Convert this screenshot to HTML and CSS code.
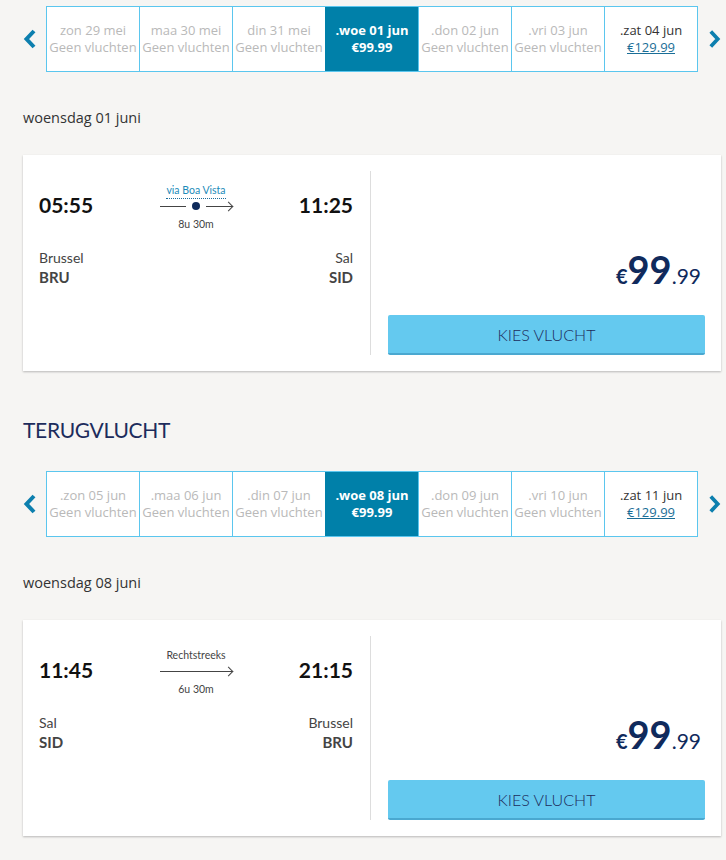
FILE: index.html
```html
<!DOCTYPE html>
<html lang="nl">
<head>
  <meta charset="UTF-8" />
  <meta name="viewport" content="width=device-width, initial-scale=1.0" />
  <title>Vluchten kiezen</title>
  <link rel="stylesheet" href="styles.css">
</head>
<body>
  <main class="page">
    <!-- Heenvlucht -->
    <div class="date-strip">
      <span class="nav-arrow">
        <svg width="14" height="22" viewBox="0 0 14 22"><path d="M11 3 L3.5 11 L11 19" fill="none" stroke="#0d7fae" stroke-width="4"/></svg>
      </span>
      <ul class="days">
        <li class="day empty"><span>zon 29 mei</span><span>Geen vluchten</span></li>
        <li class="day empty"><span>maa 30 mei</span><span>Geen vluchten</span></li>
        <li class="day empty"><span>din 31 mei</span><span>Geen vluchten</span></li>
        <li class="day active"><span>.woe 01 jun</span><span>€99.99</span></li>
        <li class="day empty"><span>.don 02 jun</span><span>Geen vluchten</span></li>
        <li class="day empty"><span>.vri 03 jun</span><span>Geen vluchten</span></li>
        <li class="day"><span>.zat 04 jun</span><a href="#">€129.99</a></li>
      </ul>
      <span class="nav-arrow">
        <svg width="14" height="22" viewBox="0 0 14 22"><path d="M3 3 L10.5 11 L3 19" fill="none" stroke="#0d7fae" stroke-width="4"/></svg>
      </span>
    </div>

    <p class="day-title">woensdag 01 juni</p>

    <section class="flight-card">
      <div class="flight-info">
        <div class="times">
          <span class="time">05:55</span>
          <div class="route">
            <span class="via">via Boa Vista</span>
            <div class="line">
              <span class="seg"></span><span class="stop"></span><span class="seg arrow"></span>
            </div>
            <span class="duration">8u 30m</span>
          </div>
          <span class="time">11:25</span>
        </div>
        <div class="places">
          <div><span class="city">Brussel</span><span class="code">BRU</span></div>
          <div class="right"><span class="city">Sal</span><span class="code">SID</span></div>
        </div>
      </div>
      <div class="flight-buy">
        <div class="price"><span class="cur">€</span><span class="big">99</span><span class="cents">.99</span></div>
        <button class="btn">KIES VLUCHT</button>
      </div>
    </section>

    <!-- Terugvlucht -->
    <h2 class="section-title">TERUGVLUCHT</h2>

    <div class="date-strip">
      <span class="nav-arrow">
        <svg width="14" height="22" viewBox="0 0 14 22"><path d="M11 3 L3.5 11 L11 19" fill="none" stroke="#0d7fae" stroke-width="4"/></svg>
      </span>
      <ul class="days">
        <li class="day empty"><span>.zon 05 jun</span><span>Geen vluchten</span></li>
        <li class="day empty"><span>.maa 06 jun</span><span>Geen vluchten</span></li>
        <li class="day empty"><span>.din 07 jun</span><span>Geen vluchten</span></li>
        <li class="day active"><span>.woe 08 jun</span><span>€99.99</span></li>
        <li class="day empty"><span>.don 09 jun</span><span>Geen vluchten</span></li>
        <li class="day empty"><span>.vri 10 jun</span><span>Geen vluchten</span></li>
        <li class="day"><span>.zat 11 jun</span><a href="#">€129.99</a></li>
      </ul>
      <span class="nav-arrow">
        <svg width="14" height="22" viewBox="0 0 14 22"><path d="M3 3 L10.5 11 L3 19" fill="none" stroke="#0d7fae" stroke-width="4"/></svg>
      </span>
    </div>

    <p class="day-title">woensdag 08 juni</p>

    <section class="flight-card">
      <div class="flight-info">
        <div class="times">
          <span class="time">11:45</span>
          <div class="route">
            <span class="direct">Rechtstreeks</span>
            <div class="line">
              <span class="seg arrow"></span>
            </div>
            <span class="duration">6u 30m</span>
          </div>
          <span class="time">21:15</span>
        </div>
        <div class="places">
          <div><span class="city">Sal</span><span class="code">SID</span></div>
          <div class="right"><span class="city">Brussel</span><span class="code">BRU</span></div>
        </div>
      </div>
      <div class="flight-buy">
        <div class="price"><span class="cur">€</span><span class="big">99</span><span class="cents">.99</span></div>
        <button class="btn">KIES VLUCHT</button>
      </div>
    </section>
  </main>
</body>
</html>
```
FILE: styles.css
```css
/* Base */
* {
  box-sizing: border-box;
  margin: 0;
  padding: 0;
}
body {
  font-family: 'Open Sans', sans-serif;
  background: #f6f5f3;
  color: #333;
}
.page {
  padding: 6px 5px 20px 23px;
}

/* Date strip */
.date-strip {
  display: flex;
  align-items: center;
}
.nav-arrow {
  width: 23px;
  display: flex;
  justify-content: flex-start;
}
.date-strip .nav-arrow:last-child {
  padding-left: 10px;
}
.days {
  list-style: none;
  display: flex;
  border: 1px solid #5bc6ee;
  background: #fff;
}
.day {
  width: 93px;
  height: 64px;
  display: flex;
  flex-direction: column;
  align-items: center;
  justify-content: center;
  font-size: 13px;
  line-height: 17.5px;
  border-left: 1px solid #5bc6ee;
  white-space: nowrap;
  overflow: hidden;
  color: #333;
}
.day:first-child {
  border-left: none;
  width: 92px;
}
.day.empty {
  color: #b9b9b9;
}
.day.active {
  background: #0080a9;
  border-left-color: #0080a9;
  color: #fff;
  font-weight: 700;
}
.day a {
  color: #1a6e97;
}

/* Headings */
.day-title {
  font-size: 14.5px;
  color: #333;
  margin: 36px 0 28px;
}
.section-title {
  font-family: 'Lato', sans-serif;
  font-weight: 400;
  font-size: 21px;
  color: #1d2c5c;
  margin: 46px 0 29px;
  letter-spacing: -0.3px;
}

/* Flight card */
.flight-card {
  width: 698px;
  height: 216px;
  background: #fff;
  box-shadow: 0 1px 2px rgba(0,0,0,0.25);
  display: flex;
  padding: 16px 0;
}
.flight-info {
  width: 348px;
  border-right: 1px solid #ddd;
  padding: 0 17px 0 16px;
  font-family: 'Lato', sans-serif;
}
.times {
  display: flex;
  justify-content: space-between;
  align-items: center;
  margin-top: 8px;
}
.time {
  font-size: 21px;
  font-weight: 700;
  color: #111;
  width: 80px;
}
.times .time:last-child {
  text-align: right;
}
.route {
  display: flex;
  flex-direction: column;
  align-items: center;
  width: 72px;
  padding-top: 5px;
}
.via {
  font-size: 10.5px;
  color: #1c8bb9;
  border-bottom: 1px dotted #1c6e9c;
  line-height: 13px;
  padding-bottom: 1px;
  margin-bottom: 2px;
}
.direct {
  font-size: 10.5px;
  color: #444;
  line-height: 13px;
  padding-bottom: 4px;
}
.line {
  display: flex;
  align-items: center;
  width: 72px;
  height: 10px;
}
.seg {
  flex: 1;
  height: 1px;
  background: #444;
  position: relative;
}
.stop {
  width: 8px;
  height: 8px;
  border-radius: 50%;
  background: #0e2a5a;
  margin: 0 6px;
}
.seg.arrow::after {
  content: "";
  position: absolute;
  right: 0;
  top: -3px;
  width: 6px;
  height: 6px;
  border-top: 1px solid #444;
  border-right: 1px solid #444;
  transform: rotate(45deg);
}
.duration {
  font-size: 10.5px;
  color: #444;
  margin-top: 7px;
  line-height: 12px;
}
.places {
  display: flex;
  justify-content: space-between;
  margin-top: 18px;
}
.places div {
  display: flex;
  flex-direction: column;
}
.places .right {
  align-items: flex-end;
}
.city {
  font-size: 14px;
  color: #444;
  line-height: 19px;
}
.code {
  font-size: 15px;
  font-weight: 700;
  color: #444;
  line-height: 20px;
}

/* Buy column */
.flight-buy {
  flex: 1;
  padding: 0 16px 0 17px;
  display: flex;
  flex-direction: column;
  justify-content: flex-end;
}
.price {
  text-align: right;
  font-family: 'Lato', sans-serif;
  color: #102a5c;
  font-weight: 700;
  padding-right: 4px;
  margin-bottom: 27px;
  line-height: 1;
}
.price .cur {
  font-size: 20px;
}
.price .big {
  font-size: 38px;
}
.price .cents {
  font-size: 21px;
  font-weight: 400;
}
.btn {
  height: 40px;
  width: 100%;
  background: #64c9ef;
  border: none;
  border-bottom: 2px solid #4aa8d0;
  border-radius: 2px;
  font-family: 'Lato', sans-serif;
  font-weight: 300;
  font-size: 16px;
  color: #1d2c5c;
  cursor: pointer;
}
```
